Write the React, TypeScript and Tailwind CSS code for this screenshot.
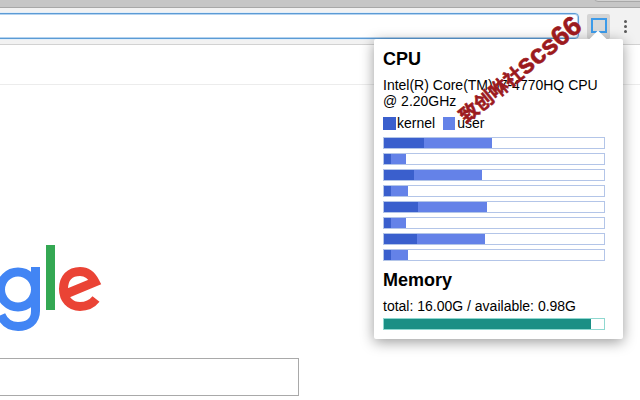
const cpuBars = [
  { kernel: 40, user: 68 },
  { kernel: 7, user: 15 },
  { kernel: 30, user: 68 },
  { kernel: 7, user: 17 },
  { kernel: 34, user: 69 },
  { kernel: 7, user: 15 },
  { kernel: 33, user: 68 },
  { kernel: 7, user: 17 },
];

function Toolbar() {
  return (
    <div className="h-[37px] bg-[#f2f2f2] border-b border-[#d2d2d2] flex items-start overflow-hidden">
      <div className="-ml-[4px] mt-[5px] shrink-0 w-[583px] h-[26px] bg-white border border-[#5b9bd5] rounded-r-[4px] shadow-[inset_0_0_0_1px_#b5d3ef,0_0_0_1px_#e3eef8]" />
      <div className="ml-[8px] mt-[6px] w-[23px] h-[25px] bg-[#d4d4d4] rounded-[2px] flex items-start justify-center pt-[4px]">
        <div className="w-[16px] h-[15px] border-2 border-[#3d9be9] bg-[#d9d9d9]" />
      </div>
      <div className="ml-[14px] mt-[12px] flex flex-col gap-[2px]">
        <div className="w-[3px] h-[3px] rounded-full bg-[#5a5a5a]" />
        <div className="w-[3px] h-[3px] rounded-full bg-[#5a5a5a]" />
        <div className="w-[3px] h-[3px] rounded-full bg-[#5a5a5a]" />
      </div>
    </div>
  );
}

function GoogleLogo() {
  return (
    <svg width="104" height="92" viewBox="0 0 104 92">
      <g fill="none" stroke="#4285f4" strokeWidth="9">
        <circle cx="18" cy="44.5" r="17.5" />
        <path d="M35.5 22 V66 C35.5 76 28 81.5 18 81.5 C10 81.5 4 77 1 70" />
      </g>
      <rect x="46" y="0" width="9" height="65" fill="#34a853" />
      <path
        d="M96 54 C92 59 86 61.5 80 61.5 C70 61.5 63.5 54 63.5 44 C63.5 33 70 26.5 80 26.5 C88 26.5 92 31 95 37 L67 48.5"
        fill="none"
        stroke="#ea4335"
        strokeWidth="9"
      />
    </svg>
  );
}

function Popup() {
  return (
    <div className="absolute left-[374px] top-[39px] w-[249px] h-[300px] bg-white rounded-[2px] shadow-[0_3px_14px_rgba(0,0,0,0.4)] px-[9px] pt-[10px] text-black">
      <div className="absolute left-[218px] -top-[6px] w-[12px] h-[12px] bg-white rotate-45" />
      <h2 className="text-[18px] leading-[20px] font-bold">CPU</h2>
      <p className="mt-[8px] text-[14px] leading-[16px]">Intel(R) Core(TM) i7-4770HQ CPU @ 2.20GHz</p>
      <div className="mt-[6px] flex items-center h-[16px] text-[14px]">
        <span className="w-[13px] h-[13px] bg-[#3a5fcd]" />
        <span className="ml-[1px]">kernel</span>
        <span className="ml-[8px] w-[12px] h-[13px] bg-[#6482e8]" />
        <span className="ml-[2px]">user</span>
      </div>
      <div className="mt-[6px] flex flex-col gap-[4px]">
        {cpuBars.map((bar, i) => (
          <div key={i} className="w-[222px] h-[12px] border border-[#b3c5e8] flex">
            <div className="h-full bg-[#3a5fcd]" style={{ width: bar.kernel }} />
            <div className="h-full bg-[#6482e8]" style={{ width: bar.user }} />
          </div>
        ))}
      </div>
      <h2 className="mt-[9px] text-[18px] leading-[20px] font-bold">Memory</h2>
      <p className="mt-[8px] text-[14px] leading-[16px]">total: 16.00G / available: 0.98G</p>
      <div className="mt-[4px] w-[222px] h-[12px] border border-[#8fd8d0]">
        <div className="h-full w-[207px] bg-[#1a8f85]" />
      </div>
    </div>
  );
}

export default function App() {
  return (
    <div className="relative w-[640px] h-[400px] overflow-hidden bg-white font-['Liberation_Sans',Arial,sans-serif]">
      <div className="h-[8px] bg-[#c6c6c6] border-b border-[#a8a8a8]" />
      <div className="absolute left-[594px] -top-[8px] w-[60px] h-[10px] border border-[#a8a8a8] rounded-[4px] bg-[#d2d2d2]" />
      <Toolbar />
      <div className="h-[40px] border-b border-[#ececec]" />
      <div className="mt-[160px]">
        <GoogleLogo />
      </div>
      <div className="mt-[21px] w-[299px] h-[38px] border border-l-0 border-[#a9a9a9]" />

      <Popup />

      <div className="absolute left-[445px] top-[55px] w-[150px] -rotate-[39deg] flex items-baseline justify-center whitespace-nowrap text-[#9c1a1e] leading-[28px] font-bold font-['Liberation_Sans','Noto_Sans_CJK_SC',sans-serif] [-webkit-text-stroke:0.6px_#9c1a1e]">
        <span className="text-[19px]">致创咻社</span>
        <span className="text-[27px]">scs66</span>
      </div>
    </div>
  );
}
